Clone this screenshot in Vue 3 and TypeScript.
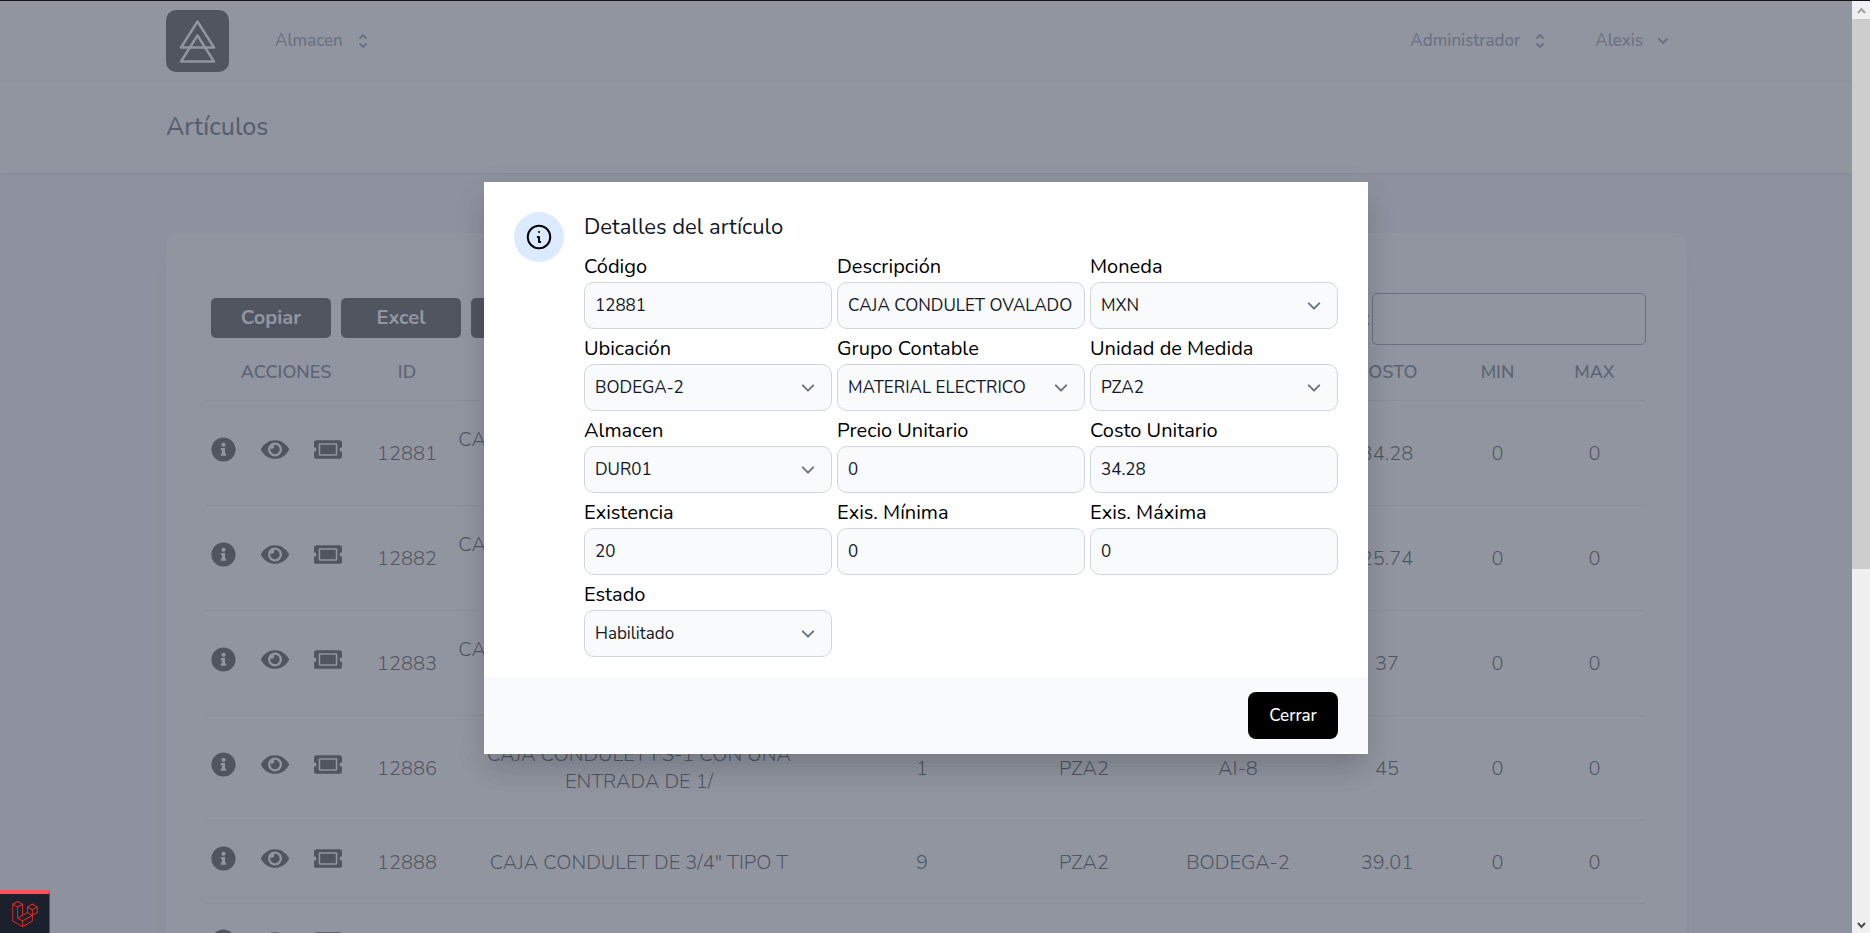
<script setup lang="ts">
import { ref } from 'vue'

interface Article {
  id: number
  description: string[]
  stock: number
  unit: string
  location: string
  cost: string
  min: number
  max: number
}

interface Field {
  key: string
  label: string
  kind: 'input' | 'select'
  value: string
}

const columns = [
  { label: 'Acciones', width: 160 },
  { label: 'ID', width: 82 },
  { label: 'Descripción', width: 382 },
  { label: 'Existencia', width: 184 },
  { label: 'Unidad', width: 140 },
  { label: 'Ubicación', width: 168 },
  { label: 'Costo', width: 130 },
  { label: 'Min', width: 91 },
  { label: 'Max', width: 103 },
]
const totalWidth = columns.reduce((sum, column) => sum + column.width, 0)

const articles: Article[] = [
  { id: 12881, description: ['CAJA CONDULET OVALADO FS DE 1/2"', 'CON TAPA'], stock: 20, unit: 'PZA2', location: 'BODEGA-2', cost: '34.28', min: 0, max: 0 },
  { id: 12882, description: ['CAJA CONDULET OVALADO FS DE 3/4"', 'CON TAPA'], stock: 12, unit: 'PZA2', location: 'BODEGA-2', cost: '25.74', min: 0, max: 0 },
  { id: 12883, description: ['CAJA CONDULET OVALADO FS DE 1/4"', 'CON TAPA'], stock: 4, unit: 'PZA2', location: 'BODEGA-2', cost: '37', min: 0, max: 0 },
  { id: 12886, description: ['CAJA CONDULET FS-1 CON UNA', 'ENTRADA DE 1/'], stock: 1, unit: 'PZA2', location: 'AI-8', cost: '45', min: 0, max: 0 },
  { id: 12888, description: ['CAJA CONDULET DE 3/4" TIPO T'], stock: 9, unit: 'PZA2', location: 'BODEGA-2', cost: '39.01', min: 0, max: 0 },
  { id: 12889, description: ['CAJA CONDULET DE 1" TIPO T'], stock: 6, unit: 'PZA2', location: 'BODEGA-2', cost: '42.5', min: 0, max: 0 },
]

const fields = ref<Field[]>([
  { key: 'codigo', label: 'Código', kind: 'input', value: '12881' },
  { key: 'descripcion', label: 'Descripción', kind: 'input', value: 'CAJA CONDULET OVALADO FS DE 1/2" CON TAPA' },
  { key: 'moneda', label: 'Moneda', kind: 'select', value: 'MXN' },
  { key: 'ubicacion', label: 'Ubicación', kind: 'select', value: 'BODEGA-2' },
  { key: 'grupo', label: 'Grupo Contable', kind: 'select', value: 'MATERIAL ELECTRICO' },
  { key: 'unidad', label: 'Unidad de Medida', kind: 'select', value: 'PZA2' },
  { key: 'almacen', label: 'Almacen', kind: 'select', value: 'DUR01' },
  { key: 'precio', label: 'Precio Unitario', kind: 'input', value: '0' },
  { key: 'costo', label: 'Costo Unitario', kind: 'input', value: '34.28' },
  { key: 'existencia', label: 'Existencia', kind: 'input', value: '20' },
  { key: 'minima', label: 'Exis. Mínima', kind: 'input', value: '0' },
  { key: 'maxima', label: 'Exis. Máxima', kind: 'input', value: '0' },
  { key: 'estado', label: 'Estado', kind: 'select', value: 'Habilitado' },
])

const open = ref(true)
const search = ref('')
const exportButtons = ['Copiar', 'Excel', 'PDF']
</script>

<template>
  <div class="shell">
    <div class="page">
      <nav class="nav">
        <div class="container nav-row">
          <a href="#" class="brand" aria-label="Inicio">
            <svg viewBox="0 0 63 62" fill="none" stroke="#fff" stroke-width="2.4" stroke-linejoin="round">
              <path d="M31.5 11.500 15 37.500H48Z" />
              <path d="M31.5 25.500 15 51.500H48Z" />
            </svg>
          </a>
          <button type="button" class="nav-button first">
            Almacen
            <svg viewBox="0 0 20 20"><path d="M10 3a1 1 0 01.707.293l3 3a1 1 0 01-1.414 1.414L10 5.414 7.707 7.707a1 1 0 01-1.414-1.414l3-3A1 1 0 0110 3zm-3.707 9.293a1 1 0 011.414 0L10 14.586l2.293-2.293a1 1 0 011.414 1.414l-3 3a1 1 0 01-1.414 0l-3-3a1 1 0 010-1.414z" /></svg>
          </button>
          <div class="nav-right">
            <button type="button" class="nav-button">
              Administrador
              <svg viewBox="0 0 20 20"><path d="M10 3a1 1 0 01.707.293l3 3a1 1 0 01-1.414 1.414L10 5.414 7.707 7.707a1 1 0 01-1.414-1.414l3-3A1 1 0 0110 3zm-3.707 9.293a1 1 0 011.414 0L10 14.586l2.293-2.293a1 1 0 011.414 1.414l-3 3a1 1 0 01-1.414 0l-3-3a1 1 0 010-1.414z" /></svg>
            </button>
            <button type="button" class="nav-button">
              Alexis
              <svg viewBox="0 0 20 20"><path d="M5.293 7.293a1 1 0 011.414 0L10 10.586l3.293-3.293a1 1 0 111.414 1.414l-4 4a1 1 0 01-1.414 0l-4-4a1 1 0 010-1.414z" /></svg>
            </button>
          </div>
        </div>
      </nav>

      <header class="heading">
        <div class="container"><h1>Artículos</h1></div>
      </header>

      <main class="container">
        <section class="card">
          <div class="table-wrap">
            <div class="tools">
              <div class="exports">
                <button v-for="name in exportButtons" :key="name" type="button" class="export">{{ name }}</button>
              </div>
              <label class="search">Buscar:<input v-model="search" type="search" /></label>
            </div>
            <table>
              <colgroup>
                <col v-for="column in columns" :key="column.label" :style="{ width: (column.width / totalWidth) * 100 + '%' }" />
              </colgroup>
              <thead>
                <tr>
                  <th v-for="column in columns" :key="column.label" scope="col">{{ column.label }}</th>
                </tr>
              </thead>
              <tbody>
                <tr v-for="article in articles" :key="article.id">
                  <td class="actions-cell">
                    <div class="actions">
                      <button type="button" aria-label="Detalles" @click="open = true">
                        <svg class="info" viewBox="0 0 512 512"><path d="M256 8C119.043 8 8 119.083 8 256c0 136.997 111.043 248 248 248s248-111.003 248-248C504 119.083 392.957 8 256 8zm0 110c23.196 0 42 18.804 42 42s-18.804 42-42 42-42-18.804-42-42 18.804-42 42-42zm56 254c0 6.627-5.373 12-12 12h-88c-6.627 0-12-5.373-12-12v-24c0-6.627 5.373-12 12-12h12v-64h-12c-6.627 0-12-5.373-12-12v-24c0-6.627 5.373-12 12-12h64c6.627 0 12 5.373 12 12v100h12c6.627 0 12 5.373 12 12v24z" /></svg>
                      </button>
                      <button type="button" aria-label="Ver">
                        <svg viewBox="0 0 576 512"><path d="M572.52 241.4C518.29 135.59 410.93 64 288 64S57.68 135.64 3.48 241.41a32.35 32.35 0 0 0 0 29.19C57.71 376.41 165.07 448 288 448s230.32-71.64 284.52-177.41a32.35 32.35 0 0 0 0-29.19zM288 400a144 144 0 1 1 144-144 143.93 143.93 0 0 1-144 144zm0-240a95.31 95.31 0 0 0-25.31 3.79 47.85 47.85 0 0 1-66.9 66.9A95.78 95.78 0 1 0 288 160z" /></svg>
                      </button>
                      <button type="button" aria-label="Vale">
                        <svg viewBox="0 0 576 512"><path d="M128 160h320v192H128V160zm400 96c0 26.51 21.49 48 48 48v96c0 26.51-21.49 48-48 48H48c-26.51 0-48-21.49-48-48v-96c26.51 0 48-21.49 48-48s-21.49-48-48-48v-96c0-26.51 21.49-48 48-48h480c26.51 0 48 21.49 48 48v96c-26.51 0-48 21.49-48 48zm-48-104c0-13.255-10.745-24-24-24H120c-13.255 0-24 10.745-24 24v208c0 13.255 10.745 24 24 24h336c13.255 0 24-10.745 24-24V152z" /></svg>
                      </button>
                    </div>
                  </td>
                  <td>{{ article.id }}</td>
                  <td><span v-for="line in article.description" :key="line" class="line">{{ line }}</span></td>
                  <td>{{ article.stock }}</td>
                  <td>{{ article.unit }}</td>
                  <td>{{ article.location }}</td>
                  <td>{{ article.cost }}</td>
                  <td>{{ article.min }}</td>
                  <td>{{ article.max }}</td>
                </tr>
              </tbody>
            </table>
          </div>
        </section>
      </main>

      <div v-if="open" class="overlay">
        <div class="modal" role="dialog" aria-modal="true" aria-labelledby="modal-title">
          <div class="modal-body">
            <div class="badge">
              <svg viewBox="0 0 24 24" fill="none" stroke="#000" stroke-width="1.6" stroke-linecap="round" stroke-linejoin="round"><path d="M13 16h-1v-4h-1m1-4h.01M21 12a9 9 0 11-18 0 9 9 0 0118 0z" /></svg>
            </div>
            <div class="modal-content">
              <h2 id="modal-title">Detalles del artículo</h2>
              <div class="fields">
                <div v-for="field in fields" :key="field.key" class="field">
                  <label :for="field.key">{{ field.label }}</label>
                  <input v-if="field.kind === 'input'" :id="field.key" v-model="field.value" type="text" />
                  <select v-else :id="field.key" v-model="field.value">
                    <option>{{ field.value }}</option>
                  </select>
                </div>
              </div>
            </div>
          </div>
          <div class="modal-footer">
            <button type="button" class="close" @click="open = false">Cerrar</button>
          </div>
        </div>
      </div>

      <a href="#" class="debug" aria-label="Laravel">
        <svg viewBox="0 0 24 24" fill="#ff2d20"><path d="M23.642 5.43a.364.364 0 01.014.1v5.149c0 .135-.073.26-.189.326l-4.323 2.49v4.934a.378.378 0 01-.188.326L9.93 23.949a.316.316 0 01-.066.027c-.008.002-.016.008-.024.01a.348.348 0 01-.192 0c-.011-.002-.02-.008-.03-.012-.02-.008-.042-.014-.062-.025L.533 18.755a.376.376 0 01-.189-.326V2.974c0-.033.005-.066.014-.098.003-.012.01-.02.014-.032a.369.369 0 01.023-.058c.004-.013.015-.022.023-.033l.033-.045c.012-.01.025-.018.037-.027.014-.012.027-.024.041-.034H.53L5.043.05a.375.375 0 01.375 0L9.93 2.647h.002c.015.01.027.021.04.033l.038.027c.013.014.02.03.033.045.008.011.02.021.025.033.01.02.017.038.024.058.003.011.01.021.013.032.01.031.014.064.014.098v9.652l3.76-2.164V5.527c0-.033.004-.066.013-.098.003-.01.01-.02.013-.032a.487.487 0 01.024-.059c.007-.012.018-.02.025-.033.012-.015.021-.03.033-.043.012-.012.025-.02.037-.028.014-.01.026-.023.041-.032h.001l4.513-2.598a.375.375 0 01.375 0l4.513 2.598c.016.01.027.021.042.031.012.01.025.018.036.028.013.014.022.03.034.044.008.012.019.021.024.033.011.02.018.04.024.06.006.01.012.021.015.032zm-.74 5.032V6.179l-1.578.908-2.182 1.256v4.283zm-4.51 7.75v-4.287l-2.147 1.225-6.126 3.498v4.325zM1.093 3.624v14.588l8.273 4.761v-4.325l-4.322-2.445-.002-.003H5.04c-.014-.01-.025-.021-.04-.031-.011-.01-.024-.018-.035-.027l-.001-.002c-.013-.012-.021-.025-.031-.04-.01-.011-.021-.022-.028-.036h-.003c-.008-.014-.013-.031-.02-.047-.006-.016-.014-.027-.018-.043a.49.49 0 01-.008-.057c-.002-.014-.006-.027-.006-.041V5.789l-2.18-1.257zM5.23.81L1.47 2.974l3.76 2.164 3.758-2.164zm1.956 13.505l2.182-1.256V3.624l-1.58.91-2.182 1.255v9.435zm11.581-10.95l-3.76 2.163 3.76 2.163 3.759-2.164zm-.376 4.978L16.21 7.087 14.63 6.18v4.283l2.182 1.256 1.58.908zm-8.65 9.654l5.514-3.148 2.756-1.572-3.757-2.163-4.323 2.489-3.941 2.27z" /></svg>
      </a>
    </div>

    <div class="scrollbar" aria-hidden="true">
      <svg viewBox="0 0 18 18" fill="none" stroke="#a3a3a3" stroke-width="2"><path d="M6 12l3.500-4L13 12" /></svg>
      <div class="thumb"></div>
      <svg class="down" viewBox="0 0 18 18" fill="none" stroke="#505050" stroke-width="2"><path d="M6 8l3.500 4L13 8" /></svg>
    </div>
  </div>
</template>

<style>
body {
  margin: 0;
}
</style>

<style scoped>
* {
  box-sizing: border-box;
}

.shell {
  display: flex;
  height: 100vh;
  overflow: hidden;
  border-top: 1px solid #15151a;
  font-family: Nunito, Lato, "Liberation Sans", sans-serif;
  font-size: 20px;
  line-height: 30px;
  color: #000;
}

button,
input,
select {
  font: inherit;
  color: inherit;
}

button {
  padding: 0;
  border: 0;
  background: none;
  cursor: pointer;
}

svg {
  display: block;
}

.page {
  position: relative;
  flex: 1;
  min-width: 0;
  overflow: hidden;
  background: #f3f4f6;
}

.container {
  width: 100%;
  max-width: 1520px;
  margin: 0 auto;
}

.nav {
  background: #fff;
  border-bottom: 1px solid #f3f4f6;
}

.nav-row {
  display: flex;
  align-items: center;
  height: 80px;
}

.brand {
  width: 63px;
  height: 62px;
  border-radius: 10px;
  background: #000;
}

.nav-button {
  display: flex;
  align-items: center;
  gap: 10px;
  font-size: 17px;
  font-weight: 500;
  color: #6b7280;
}

.nav-button svg {
  width: 20px;
  height: 20px;
  fill: currentColor;
}

.nav-button.first {
  margin-left: 46px;
}

.nav-right {
  display: flex;
  gap: 45px;
  margin-left: auto;
  padding-right: 13px;
}

.heading {
  position: relative;
  padding: 30px 0;
  background: #fff;
  box-shadow: 0 1px 3px rgba(0, 0, 0, 0.1), 0 1px 2px rgba(0, 0, 0, 0.06);
}

.heading h1 {
  margin: 0;
  font-size: 25px;
  font-weight: 500;
  line-height: 31px;
  color: #1f2937;
}

.card {
  margin-top: 60px;
  padding: 59px 39px;
  border-radius: 10px;
  background: #fff;
  box-shadow: 0 20px 25px -5px rgba(0, 0, 0, 0.1), 0 10px 10px -5px rgba(0, 0, 0, 0.04);
}

.table-wrap {
  border: 1px solid #f9fafb;
}

.tools {
  display: flex;
  justify-content: space-between;
  align-items: flex-start;
}

.exports {
  display: flex;
  gap: 10px;
  padding: 5px;
}

.export {
  width: 120px;
  height: 40px;
  border-radius: 5px;
  background: #000;
  color: #fff;
  font-weight: 700;
}

.search {
  display: flex;
  align-items: center;
  gap: 2px;
  color: #374151;
}

.search input {
  width: 274px;
  height: 52px;
  padding: 10px;
  border: 1px solid #6b7280;
  border-radius: 5px;
  background: #fff;
}

table {
  width: 100%;
  table-layout: fixed;
  border-collapse: collapse;
  text-align: center;
}

th {
  padding: 12px 0 13px;
  font-size: 18px;
  font-weight: 600;
  text-transform: uppercase;
  color: #374151;
  border-bottom: 1px solid #e5e7eb;
}

td {
  padding: 25px 0;
  font-weight: 300;
  line-height: 27px;
  border-bottom: 1px solid #e5e7eb;
}

.line {
  display: block;
}

td.actions-cell {
  padding-left: 5px;
}

.actions {
  display: flex;
  align-items: flex-start;
  gap: 25px;
  height: 32px;
}

.actions svg {
  width: 28px;
  height: 25px;
}

.actions svg.info {
  width: 25px;
}

.overlay {
  position: absolute;
  inset: 0;
  display: flex;
  justify-content: center;
  align-items: center;
  padding-top: 2px;
  background: rgba(107, 114, 128, 0.75);
}

.modal {
  width: 100%;
  max-width: 884px;
  background: #fff;
  box-shadow: 0 20px 25px -5px rgba(0, 0, 0, 0.1), 0 10px 30px 0 rgba(0, 0, 0, 0.1);
}

.modal-body {
  display: flex;
  gap: 20px;
  padding: 30px 30px 20px;
}

.badge {
  display: flex;
  flex: none;
  justify-content: center;
  align-items: center;
  width: 50px;
  height: 50px;
  border-radius: 50%;
  background: #dbeafe;
}

.badge svg {
  width: 30px;
  height: 30px;
}

.modal-content {
  flex: 1;
  min-width: 0;
}

h2 {
  margin: 0 0 10px;
  font-size: 22px;
  font-weight: 400;
  line-height: 30px;
  color: #111827;
}

.fields {
  display: grid;
  grid-template-columns: repeat(3, minmax(0, 1fr));
  gap: 5px;
}

.field {
  display: flex;
  flex-direction: column;
}

.field input,
.field select {
  width: 100%;
  height: 47px;
  padding: 0 10px;
  border: 1px solid #d1d5db;
  border-radius: 10px;
  background-color: #f9fafb;
  font-size: 17px;
  color: #111827;
}

.field select {
  appearance: none;
  background-image: url("data:image/svg+xml,%3csvg xmlns='http://www.w3.org/2000/svg' fill='none' viewBox='0 0 20 20'%3e%3cpath stroke='%236b7280' stroke-linecap='round' stroke-linejoin='round' stroke-width='1.5' d='M6 8l4 4 4-4'/%3e%3c/svg%3e");
  background-position: right 10px center;
  background-repeat: no-repeat;
  background-size: 26px 26px;
}

.modal-footer {
  display: flex;
  justify-content: flex-end;
  padding: 15px 30px;
  background: #f9fafb;
}

.close {
  width: 90px;
  height: 47px;
  border-radius: 8px;
  background: #000;
  color: #fff;
  font-size: 17px;
  font-weight: 500;
}

.debug {
  position: absolute;
  bottom: 0;
  left: 0;
  display: flex;
  justify-content: center;
  width: 50px;
  height: 43px;
  padding-top: 7px;
  border-top: 4px solid #ff5060;
  border-right: 1px solid #4a5568;
  background: #1a202c;
}

.debug svg {
  width: 26px;
  height: 26px;
}

.scrollbar {
  display: flex;
  flex: none;
  flex-direction: column;
  width: 18px;
  background: #f0f0f0;
}

.scrollbar svg {
  flex: none;
  width: 18px;
  height: 18px;
}

.thumb {
  height: 59%;
  background: #cdcdcd;
}

.down {
  margin-top: auto;
}
</style>
